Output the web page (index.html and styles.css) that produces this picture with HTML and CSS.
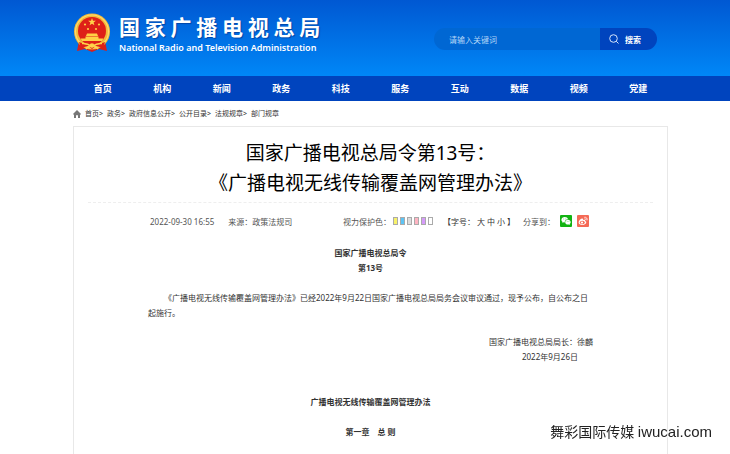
FILE: index.html
```html
<!DOCTYPE html>
<html lang="zh-CN">

<head>
    <meta charset="UTF-8">
    <meta name="viewport" content="width=device-width, initial-scale=1.0">
    <title>国家广播电视总局</title>
    <link rel="stylesheet" href="styles.css">
</head>

<body>
    <header class="header">
        <div class="wrap header-inner">
            <a class="logo" href="#">
                <svg class="emblem" viewBox="0 0 38 40" aria-hidden="true">
                    <path d="M6 28 L4 38 L12 36 L19 39 L26 36 L34 38 L32 28 Z" fill="#d8201c" />
                    <circle cx="19" cy="18.500" r="18" fill="#f3b93a" />
                    <circle cx="19" cy="18.500" r="16.500" fill="none" stroke="#ffdc6b" stroke-width="1.200" />
                    <circle cx="19" cy="18" r="14" fill="#de2018" />
                    <path d="M19 5 l1 2.700 h2.900 l-2.300 1.800 .8 2.800 -2.400 -1.600 -2.400 1.600 .8 -2.800 -2.300 -1.800 h2.900z" fill="#ffd34a" />
                    <g fill="#ffcf45">
                        <circle cx="12" cy="11.500" r="1.100" />
                        <circle cx="26" cy="11.500" r="1.100" />
                        <circle cx="15" cy="16" r="1.100" />
                        <circle cx="23" cy="16" r="1.100" />
                        <path d="M14 20.500 h10 l1 2.500 h-12z" />
                        <path d="M12.500 23.500 h13 v2 h5 l-1.500 2.500 h-20 l-1.500 -2.500 h5z" />
                    </g>
                    <path d="M6 29 Q19 35 32 29 L30 35 L23 33 L19 36 L15 33 L8 35Z" fill="#de2018" />
                    <path d="M9 30.500 Q14 30 19 33.500 Q24 30 29 30.500 M13 36 Q19 29 25 36" fill="none" stroke="#ffd34a" stroke-width="1.600" />
                    <circle cx="19" cy="32.500" r="2.300" fill="#ffd34a" />
                </svg>
                <span class="logo-text">
                    <span class="logo-cn">国 家 广 播 电 视 总 局</span>
                    <span class="logo-en">National Radio and Television Administration</span>
                </span>
            </a>
            <form class="search">
                <input type="text" class="search-box" aria-label="关键词" placeholder="请输入关键词">
                <button type="button" class="search-btn">
                    <svg viewBox="0 0 10 10" aria-hidden="true">
                        <circle cx="4.500" cy="4.500" r="3.800" />
                        <path d="M7.300 7.300 L9.500 9.500" />
                    </svg>
                    搜索
                </button>
            </form>
        </div>
    </header>

    <nav class="nav">
        <div class="wrap nav-list">
            <a href="#">首页</a>
            <a href="#">机构</a>
            <a href="#">新闻</a>
            <a href="#">政务</a>
            <a href="#">科技</a>
            <a href="#">服务</a>
            <a href="#">互动</a>
            <a href="#">数据</a>
            <a href="#">视频</a>
            <a href="#">党建</a>
        </div>
    </nav>

    <div class="wrap crumbs">
        <svg class="home" viewBox="0 0 8 8" aria-hidden="true">
            <path d="M4 0 L8 4 L7.300 4.700 L7 4.400 V8 H5 V5.200 H3 V8 H1 V4.400 L.7 4.700 L0 4 Z" />
        </svg>
        <span><a href="#">首页</a>&gt;</span>
        <span><a href="#">政务</a>&gt;</span>
        <span><a href="#">政府信息公开</a>&gt;</span>
        <span><a href="#">公开目录</a>&gt;</span>
        <span><a href="#">法规规章</a>&gt;</span>
        <span><a href="#">部门规章</a></span>
    </div>

    <main class="wrap article">
        <h1>国家广播电视总局令第13号：<br>《广播电视无线传输覆盖网管理办法》</h1>

        <div class="meta">
            <span class="date">2022-09-30 16:55</span>
            <span class="source">来源：政策法规司</span>
            <div class="colors">
                视力保护色：
                <button type="button" class="swatch yellow" aria-label="黄色"></button>
                <button type="button" class="swatch blue" aria-label="蓝色"></button>
                <button type="button" class="swatch gray" aria-label="灰色"></button>
                <button type="button" class="swatch pink" aria-label="粉色"></button>
                <button type="button" class="swatch purple" aria-label="紫色"></button>
                <button type="button" class="swatch white" aria-label="白色"></button>
            </div>
            <div class="sizes">
                【字号：
                <button type="button">大</button>
                <button type="button">中</button>
                <button type="button">小</button>
                】
            </div>
            <div class="share">
                分享到：
                <a href="#" aria-label="微信">
                    <svg viewBox="0 0 12 12">
                        <rect width="12" height="12" rx="1" fill="#12b312" />
                        <path d="M4.800 2 C2.900 2 1.400 3.200 1.400 4.800 C1.400 5.700 1.900 6.400 2.600 6.900 L2.300 8 L3.600 7.300 L4.800 7.500 C4.500 5.500 6 4.200 8 4.200 C7.700 2.900 6.400 2 4.800 2Z" fill="#fff" />
                        <path d="M8 4.800 C6.400 4.800 5.200 5.900 5.200 7.200 C5.200 8.600 6.400 9.600 8 9.600 L8.800 9.500 L9.900 10.100 L9.600 9.100 C10.300 8.700 10.700 8 10.700 7.200 C10.700 5.900 9.500 4.800 8 4.800Z" fill="#fff" />
                        <path d="M3.500 4h.6M5.500 4h.6M6.900 6.500h.5M8.700 6.500h.5" stroke="#12b312" stroke-width=".7" />
                    </svg>
                </a>
                <a href="#" aria-label="微博">
                    <svg viewBox="0 0 12 12">
                        <rect width="12" height="12" rx="1" fill="#f56a56" />
                        <path d="M5 3.600 C3.400 4 1.600 5.900 1.600 7.400 C1.600 9 3.400 9.900 5.300 9.900 C7.700 9.900 9.300 8.600 9.300 7.300 C9.300 6.500 8.700 6.100 8.100 5.900 C8.500 4.900 7.700 4.500 6 5.200 C6.400 4.200 6 3.400 5 3.600Z" fill="#fff" />
                        <ellipse cx="5.300" cy="7.500" rx="2.500" ry="1.700" fill="#f56a56" />
                        <circle cx="5" cy="7.600" r="1.100" fill="#fff" />
                        <path d="M7.300 2.300 C9.300 1.900 10.700 3.500 10 5.400 M7.600 3.700 C8.500 3.600 9 4.200 8.800 5" fill="none" stroke="#fff" stroke-width=".8" />
                    </svg>
                </a>
            </div>
        </div>

        <div class="content">
            <p class="center">国家广播电视总局令<br>第13号</p>
            <p class="indent">《广播电视无线传输覆盖网管理办法》已经2022年9月22日国家广播电视总局局务会议审议通过，现予公布，自公布之日起施行。</p>
            <div class="sign">
                <p>国家广播电视总局局长：徐麟</p>
                <p class="sign-date">2022年9月26日</p>
            </div>
            <h2>广播电视无线传输覆盖网管理办法</h2>
            <h3>第一章　总 则</h3>
        </div>
    </main>

    <div class="watermark">舞彩国际传媒 <span>iwucai.com</span></div>
</body>

</html>
```
FILE: styles.css
```css
* {
    box-sizing: border-box;
}

body {
    margin: 0;
    min-height: 100vh;
    display: flex;
    flex-direction: column;
    background: #fff;
    color: #333;
    font-family: "Noto Sans", "Noto Sans CJK SC", sans-serif;
    font-size: 8px;
    line-height: 15px;
}

a {
    color: inherit;
    text-decoration: none;
}

button,
input {
    font: inherit;
    color: inherit;
    border: 0;
    padding: 0;
    background: none;
}

p,
h1,
h2,
h3 {
    margin: 0;
}

.wrap {
    margin: 0 62px 0 73px;
}

/* header */
.header {
    background: linear-gradient(#0058d2, #0087f7);
    color: #fff;
}

.header-inner {
    display: flex;
    justify-content: space-between;
    align-items: center;
    padding: 12px 11px 22px 0;
}

.logo {
    display: flex;
    align-items: center;
    gap: 8px;
}

.emblem {
    width: 38px;
    height: 40px;
}

.logo-text {
    display: flex;
    flex-direction: column;
    gap: 2px;
}

.logo-cn {
    font-family: "Noto Sans CJK SC", sans-serif;
    font-size: 21px;
    font-weight: 700;
    line-height: 28px;
    white-space: nowrap;
    text-shadow: 1px 1px 1px #0046a8;
}

.logo-en {
    font-size: 9px;
    font-weight: 600;
    line-height: 12px;
    white-space: nowrap;
}

.search {
    display: flex;
    height: 22px;
    margin-top: 12px;
    border-radius: 11px;
    overflow: hidden;
}

.search-box {
    width: 166px;
    padding: 0 15px;
    background: #0067d3;
}

.search-box::placeholder {
    color: #b4d6f7;
}

.search-btn {
    display: flex;
    align-items: center;
    gap: 6px;
    width: 57px;
    padding-left: 9px;
    background: #0044be;
    font-weight: 700;
}

.search-btn svg {
    width: 10px;
    height: 10px;
    fill: none;
    stroke: #d5e4fa;
}

/* nav */
.nav {
    background: #0044be;
    color: #fff;
}

.nav-list {
    display: flex;
}

.nav-list a {
    flex: 1;
    text-align: center;
    font-size: 9px;
    font-weight: 700;
    line-height: 25px;
}

/* breadcrumb */
.crumbs {
    display: flex;
    align-items: center;
    gap: 4px;
    height: 25px;
    font-size: 7px;
}

.home {
    width: 8px;
    height: 8px;
    fill: #777;
}

/* article */
.article {
    flex: 1;
    padding: 11px 14px 14px;
    border: 1px solid #e8e8e8;
    border-bottom: 0;
}

.article h1 {
    padding-bottom: 4px;
    border-bottom: 1px dashed #eee;
    color: #000;
    font-size: 19px;
    font-weight: 400;
    line-height: 30px;
    text-align: center;
}

.meta {
    display: flex;
    align-items: center;
    height: 36px;
    padding: 0 64px 0 62px;
    color: #555;
    white-space: nowrap;
}

.source {
    margin-left: 14px;
}

.colors,
.sizes,
.share {
    display: flex;
    align-items: center;
}

.colors {
    gap: 2px;
    margin-left: auto;
}

.swatch {
    width: 5px;
    height: 8px;
    border: 1px solid #aaa;
}

.yellow {
    background: #f8f26a;
}

.blue {
    background: #5cc4f5;
}

.gray {
    background: #ddd;
}

.pink {
    background: #ffb4c2;
}

.purple {
    background: #d69bfa;
}

.white {
    background: #fff;
}

.sizes {
    gap: 2px;
    margin-left: 10px;
    color: #333;
}

.share {
    gap: 5px;
    margin-left: 8px;
}

.share svg {
    display: block;
    width: 12px;
    height: 12px;
}

.content {
    padding: 6px 60px 0;
}

.center {
    font-weight: 700;
    text-align: center;
}

.indent {
    margin-top: 15px;
    text-indent: 2em;
}

.sign {
    margin-top: 14px;
    text-align: right;
}

.sign-date {
    padding-right: 15px;
}

.content h2,
.content h3 {
    font-size: 8px;
    text-align: center;
}

.content h2 {
    margin-top: 30px;
}

.content h3 {
    margin-top: 15px;
}

.watermark {
    position: fixed;
    right: 18px;
    bottom: 12px;
    color: #222;
    font-size: 14px;
    line-height: 20px;
    text-shadow: 0 0 2px #fff, 1px 1px 0 #fff;
}

.watermark span {
    font-family: "Liberation Sans", sans-serif;
    font-size: 15px;
}
```
